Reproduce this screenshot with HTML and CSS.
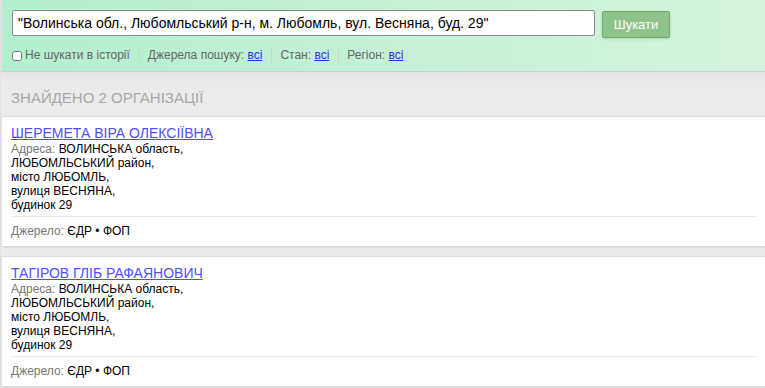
FILE: index.html
```html
<!DOCTYPE html>
<html lang="uk">
<head>
    <meta charset="UTF-8">
    <title>Пошук організацій</title>
    <link rel="stylesheet" href="styles.css">
</head>
<body>

    <div class="search-box">
        <div class="search-bar">
            <input type="text" id="q" value="&quot;Волинська обл., Любомльський р-н, м. Любомль, вул. Весняна, буд. 29&quot;">
            <button id="search-btn">Шукати</button>
        </div>
        <div class="search-options">
            <label class="opt first"><input type="checkbox"> Не шукати в історії</label>
            <span class="opt">Джерела пошуку: <a href="#">всі</a></span>
            <span class="opt">Стан: <a href="#">всі</a></span>
            <span class="opt">Регіон: <a href="#">всі</a></span>
        </div>
    </div>

    <div class="results">
        <h2 class="results-title">Знайдено 2 організації</h2>

        <div class="card">
            <a class="card-name" href="#">ШЕРЕМЕТА ВІРА ОЛЕКСІЇВНА</a>
            <div class="card-address">
                <span class="label">Адреса:</span> ВОЛИНСЬКА область,<br>
                ЛЮБОМЛЬСЬКИЙ район,<br>
                місто ЛЮБОМЛЬ,<br>
                вулиця ВЕСНЯНА,<br>
                будинок 29
            </div>
            <div class="card-source"><span class="label">Джерело:</span> ЄДР • ФОП</div>
        </div>

        <div class="card">
            <a class="card-name" href="#">ТАГІРОВ ГЛІБ РАФАЯНОВИЧ</a>
            <div class="card-address">
                <span class="label">Адреса:</span> ВОЛИНСЬКА область,<br>
                ЛЮБОМЛЬСЬКИЙ район,<br>
                місто ЛЮБОМЛЬ,<br>
                вулиця ВЕСНЯНА,<br>
                будинок 29
            </div>
            <div class="card-source"><span class="label">Джерело:</span> ЄДР • ФОП</div>
        </div>
    </div>

</body>
</html>
```

FILE: styles.css
```css
body { margin: 0; padding-left: 1px; font-family: "Liberation Sans", Arial, sans-serif; background: #ebebeb; color: #000; border-left: 1px solid #e0e0e0; }
.search-box { height: 61px; padding: 10px 0 0 10px; background: linear-gradient(to right, #b3efcf, #d6f3de); border-bottom: 1px solid #cfcfcf; box-shadow: 0 2px 4px rgba(0,0,0,0.08); }
.search-bar { display: flex; align-items: flex-start; gap: 7px; }
.search-bar input { width: 583px; height: 26px; box-sizing: border-box; padding: 0 5px; font-family: inherit; font-size: 14px; color: #000; border: 1px solid #8a8a8a; border-radius: 2px; background: #fff; }
.search-bar button { margin-top: 1px; width: 68px; height: 27px; font-family: inherit; font-size: 13px; color: #fff; background: #8fc38b; border: 1px solid #6dad69; border-radius: 2px; box-shadow: 0 1px 3px rgba(0,0,0,0.15); cursor: pointer; }
.search-options { display: flex; align-items: center; margin-top: 9px; font-size: 12px; color: #666; }
.search-options a { color: #2d2df5; }
.opt { padding-left: 8px; margin-left: 9px; border-left: 1px solid #c8d8c8; line-height: 16px; }
.opt.first { padding-left: 0; margin-left: 0; border-left: none; display: flex; align-items: center; }
.opt input { width: 10px; height: 10px; margin: 1px 3px 0 0; }
.results { background: linear-gradient(#e2e2e2, #ebebeb 10px); }
.results-title { margin: 0; padding: 16px 0 8px 9px; font-size: 15px; line-height: 20px; font-weight: normal; text-transform: uppercase; color: #a8a8a8; }
.card { margin-bottom: 10px; padding: 7px 8px 8px 9px; background: #fff; border-top: 1px solid #dedede; box-shadow: 0 1px 2px rgba(0,0,0,0.12); }
.card-name { display: block; font-size: 14px; line-height: 18px; color: #4f4ffd; }
.card-address { font-size: 12px; line-height: 14px; padding-bottom: 4px; border-bottom: 1px solid #e8e8e8; }
.card-source { padding-top: 7px; font-size: 12px; line-height: 14px; }
.label { color: #777; }
```
